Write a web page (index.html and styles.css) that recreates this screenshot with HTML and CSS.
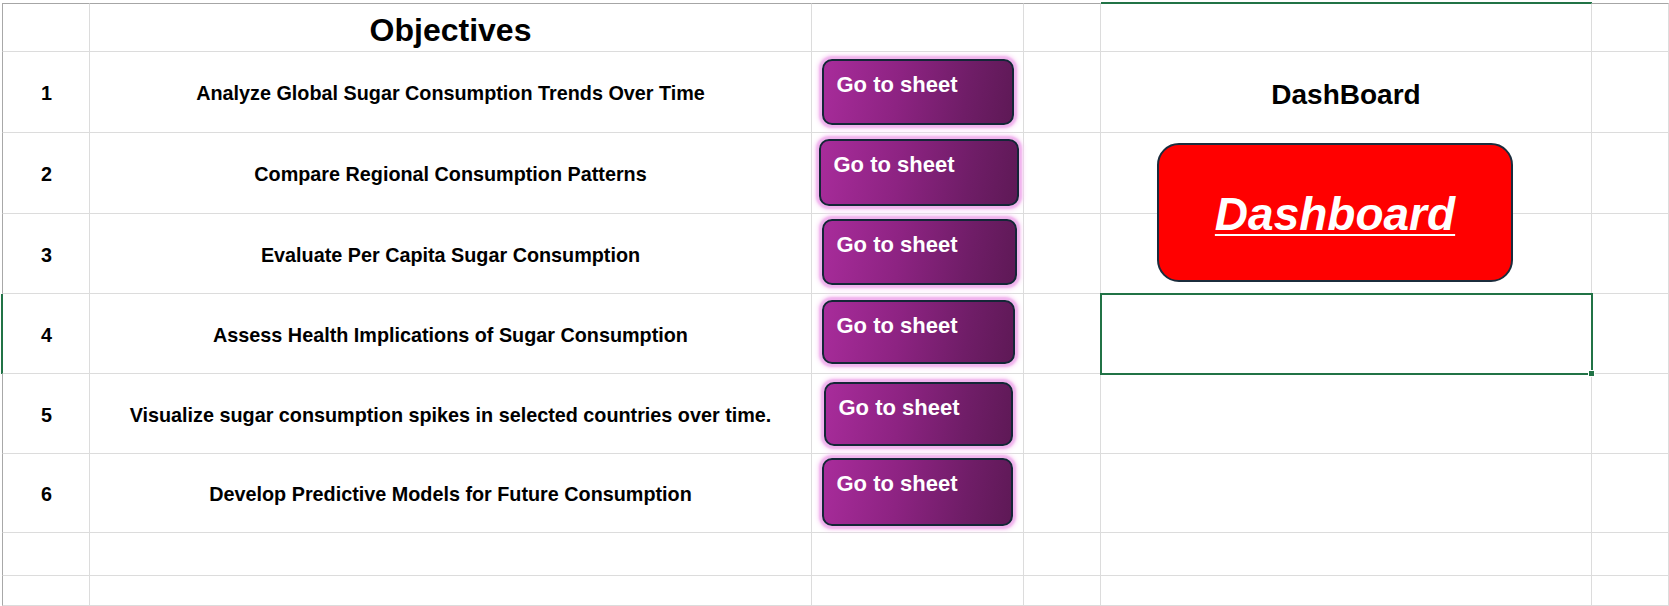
FILE: index.html
```html
<!DOCTYPE html>
<html lang="en">
<head>
<meta charset="utf-8">
<title>Objectives</title>
<link rel="stylesheet" href="styles.css">
</head>
<body>
<div class="sheet">
  <div class="c ca hdr"></div>
  <div class="c cb hdr title">Objectives</div>
  <div class="c hdr"></div>
  <div class="c hdr"></div>
  <div class="c hdr sel-col"></div>
  <div class="c hdr"></div>

  <div class="c ca num">1</div>
  <div class="c cb txt">Analyze Global Sugar Consumption Trends Over Time</div>
  <div class="c"></div>
  <div class="c"></div>
  <div class="c label">DashBoard</div>
  <div class="c"></div>

  <div class="c ca num">2</div>
  <div class="c cb txt">Compare Regional Consumption Patterns</div>
  <div class="c"></div>
  <div class="c"></div>
  <div class="c"></div>
  <div class="c"></div>

  <div class="c ca num">3</div>
  <div class="c cb txt">Evaluate Per Capita Sugar Consumption</div>
  <div class="c"></div>
  <div class="c"></div>
  <div class="c"></div>
  <div class="c"></div>

  <div class="c ca num row-sel">4</div>
  <div class="c cb txt">Assess Health Implications of Sugar Consumption</div>
  <div class="c"></div>
  <div class="c"></div>
  <div class="c active"></div>
  <div class="c"></div>

  <div class="c ca num">5</div>
  <div class="c cb txt">Visualize sugar consumption spikes in selected countries over time.</div>
  <div class="c"></div>
  <div class="c"></div>
  <div class="c"></div>
  <div class="c"></div>

  <div class="c ca num">6</div>
  <div class="c cb txt">Develop Predictive Models for Future Consumption</div>
  <div class="c"></div>
  <div class="c"></div>
  <div class="c"></div>
  <div class="c"></div>

  <div class="c ca"></div>
  <div class="c cb"></div>
  <div class="c"></div>
  <div class="c"></div>
  <div class="c"></div>
  <div class="c"></div>

  <div class="c ca"></div>
  <div class="c cb"></div>
  <div class="c"></div>
  <div class="c"></div>
  <div class="c"></div>
  <div class="c"></div>

  <a class="go b1">Go to sheet</a>
  <a class="go b2">Go to sheet</a>
  <a class="go b3">Go to sheet</a>
  <a class="go b4">Go to sheet</a>
  <a class="go b5">Go to sheet</a>
  <a class="go b6">Go to sheet</a>

  <a class="dash"><span>Dashboard</span></a>
</div>
</body>
</html>
```
FILE: styles.css
```css
html, body {
  margin: 0;
  padding: 0;
  background: #ffffff;
  overflow: hidden;
}

.sheet {
  position: relative;
  box-sizing: border-box;
  width: 1669px;
  height: 606px;
  padding: 3px 0 0 2px;
  display: grid;
  grid-template-columns: 88px 722px 212px 77px 491px 77px;
  grid-template-rows: 49px 81px 81px 80px 80px 80px 79px 43px 30px;
  font-family: "Liberation Sans", Arial, sans-serif;
  color: #000;
}

.c {
  box-sizing: border-box;
  border-right: 1px solid #dcdcdc;
  border-bottom: 1px solid #dcdcdc;
  display: flex;
  align-items: center;
  justify-content: center;
  text-align: center;
  white-space: nowrap;
}

.ca {
  border-left: 1px solid #a8a8a8;
}

.hdr {
  border-top: 1px solid #a6a6a6;
}

.sel-col {
  border-top-color: #217346;
  box-shadow: 0 -1px 0 #217346;
}

.title {
  align-items: flex-end;
  padding-bottom: 2px;
  font-weight: 700;
  font-size: 32px;
}

.num,
.txt {
  font-weight: 700;
  font-size: 19.8px;
  padding-top: 3px;
}

.num {
  padding-left: 1px;
}

.label {
  font-weight: 700;
  font-size: 28px;
  padding-top: 5px;
}

.row-sel {
  border-left-color: #217346;
  box-shadow: -1px 0 0 #217346;
}

.active {
  position: relative;
  outline: 2px solid #217346;
  outline-offset: -1px;
}

.active::after {
  content: "";
  position: absolute;
  right: -4px;
  bottom: -4px;
  width: 5px;
  height: 5px;
  background: #217346;
  border: 1px solid #ffffff;
}

.go {
  position: absolute;
  box-sizing: border-box;
  border: 2.5px solid #142637;
  border-radius: 10px;
  background: linear-gradient(100deg, #a82c9b 0%, #8d2382 40%, #6f1d67 75%, #5e1956 100%);
  box-shadow: 0 0 2px 3px #f1b3ee, 0 0 5px 4px #f9d9f6;
  color: #ffffff;
  font-family: "Liberation Sans", Arial, sans-serif;
  font-weight: 700;
  font-size: 22px;
  line-height: normal;
  padding: 10.5px 12.5px;
  white-space: nowrap;
}

.b1 { left: 822px; top: 59px; width: 192px; height: 66px; }
.b2 { left: 819px; top: 139px; width: 200px; height: 67px; }
.b3 { left: 822px; top: 219px; width: 195px; height: 66px; }
.b4 { left: 822px; top: 300px; width: 193px; height: 64px; }
.b5 { left: 824px; top: 382px; width: 189px; height: 64px; }
.b6 { left: 822px; top: 458px; width: 191px; height: 68px; }

.dash {
  position: absolute;
  left: 1157px;
  top: 143px;
  width: 356px;
  height: 139px;
  box-sizing: border-box;
  border: 2px solid #1b2c3c;
  border-radius: 22px;
  background: #ff0000;
  display: flex;
  align-items: center;
  justify-content: center;
  color: #ffffff;
  font-family: "Liberation Sans", Arial, sans-serif;
  font-weight: 700;
  font-style: italic;
  font-size: 46px;
}

.dash span {
  text-decoration: underline;
  text-decoration-thickness: 2px;
  text-underline-offset: 4px;
  padding-top: 2px;
}
```
